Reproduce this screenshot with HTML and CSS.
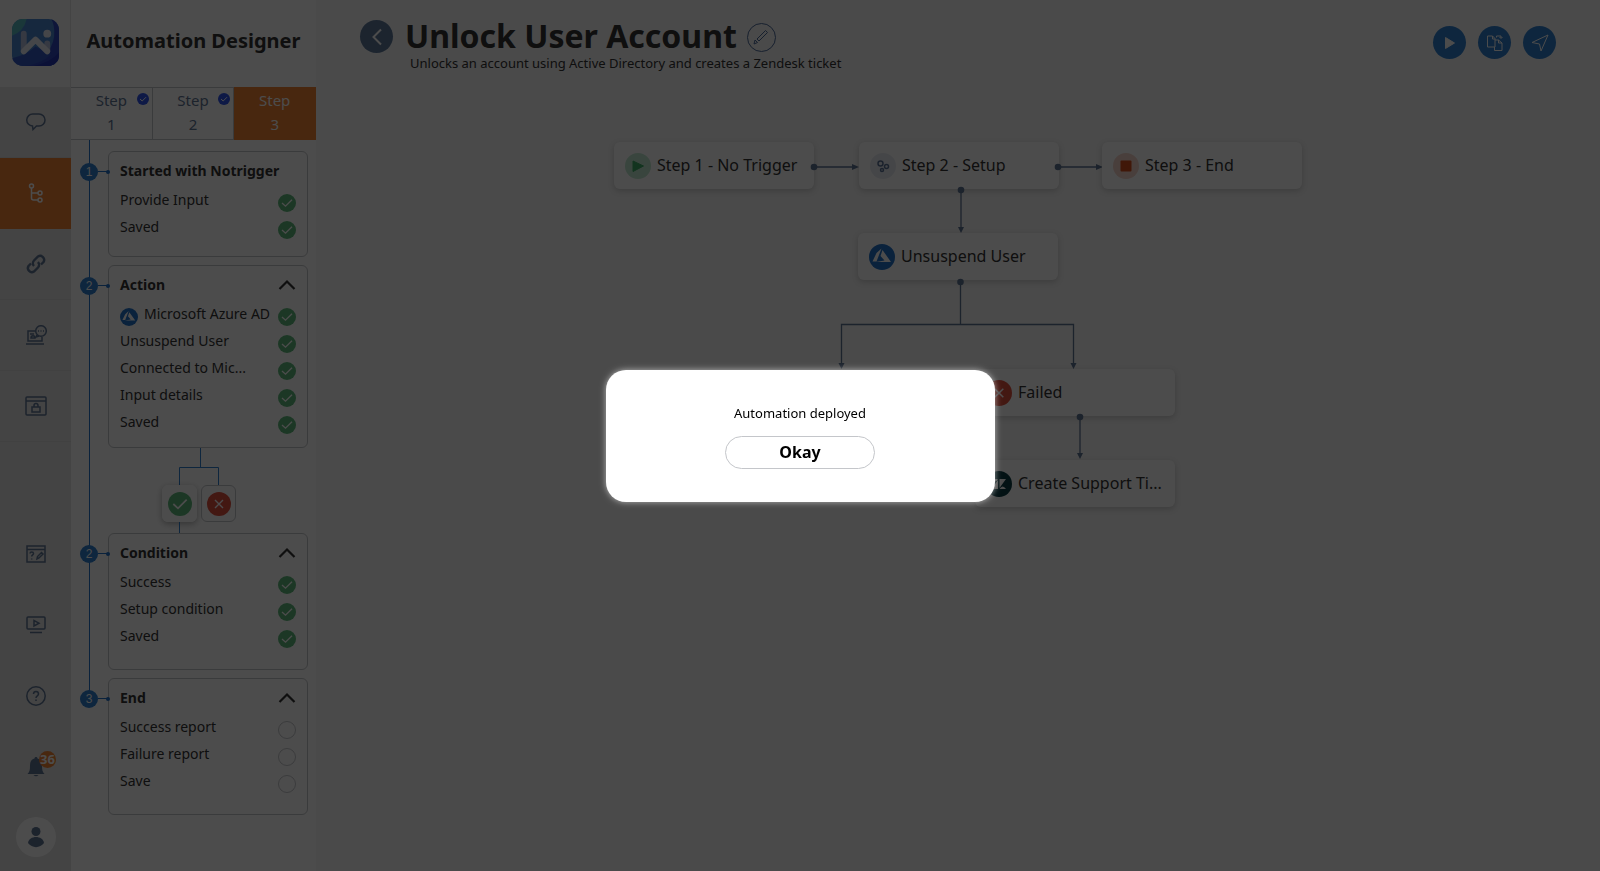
FILE: index.html
```html
<!DOCTYPE html>
<html lang="en">
<head>
  <meta charset="UTF-8" />
  <title>Automation Designer</title>
  <link rel="stylesheet" href="styles.css">
</head>
<body>

  <!-- shared icons -->
  <svg class="sprite" aria-hidden="true">
    <symbol id="check" viewBox="0 0 18 18"><circle cx="9" cy="9" r="9" fill="#5fba7d"/><path d="M4 9l3.5 3.2 6.5-6.4" fill="none" stroke="#fff" stroke-width="1.3"/></symbol>
    <symbol id="check-blue" viewBox="0 0 12 12"><circle cx="6" cy="6" r="6" fill="#2f54eb"/><path d="M3 6l2.2 2 3.8-3.8" fill="none" stroke="#fff"/></symbol>
    <symbol id="circle" viewBox="0 0 18 18"><circle cx="9" cy="9" r="8.5" fill="none" stroke="#c4c6ca"/></symbol>
    <symbol id="cross" viewBox="0 0 24 24"><circle cx="12" cy="12" r="12" fill="#e2503f"/><path d="M8 8l8 8M16 8l-8 8" fill="none" stroke="#fff" stroke-width="1.4"/></symbol>
    <symbol id="chevron" viewBox="0 0 18 12"><path d="M1.500 10L9 2.500l7.500 7.500" fill="none" stroke="#333" stroke-width="2.2"/></symbol>
    <symbol id="azure" viewBox="0 0 26 26"><circle cx="13" cy="13" r="13" fill="#2472c8"/><path d="M12.500 4.500L7.500 9 3.500 17.500h4zM13.500 6l-2 6 4 4.500-8.500 1.500h15z" fill="#fff"/></symbol>
  </svg>

  <div class="app">
    <nav class="rail">
      <a class="logo" href="#" aria-label="Home">
        <svg width="47" height="47" viewBox="0 0 48 48">
          <defs>
            <clipPath id="logoClip"><rect width="48" height="48" rx="11"/></clipPath>
          </defs>
          <g clip-path="url(#logoClip)">
            <rect width="48" height="48" fill="#4a86d0"/>
            <path d="M0 0h15Q12 13 0 17z" fill="#58b8c0"/>
            <path d="M40 0h8v48H10Q40 40 43 18 44 6 40 0z" fill="#2f49c0"/>
            <path d="M0 48V40Q14 37 24 28L40 36Q30 46 12 48z" fill="#3558c4"/>
            <path d="M22 48Q40 44 48 34v14z" fill="#2636b4"/>
          </g>
          <g fill="none" stroke-linecap="round" stroke-linejoin="round" stroke-width="6">
            <path d="M12 15v17M36 25v7" stroke="#b4c0dc"/>
            <path d="M12 33l12-12 12 12" stroke="#e8ecf4"/>
          </g>
          <circle cx="36" cy="15" r="4" fill="#e8ecf4"/>
        </svg>
      </a>
      <a class="rail-item" href="#" aria-label="Chat">
        <svg width="20" height="18" viewBox="0 0 20 18"><path d="M7 1h6a6 6 0 0 1 0 12h-2.500L7 16.500 6.500 13A6 6 0 0 1 7 1z"/></svg>
      </a>
      <a class="rail-item active" href="#" aria-label="Automations">
        <svg width="16" height="20" viewBox="0 0 16 20"><circle cx="3.500" cy="3" r="2"/><circle cx="12" cy="10" r="2"/><circle cx="12" cy="17" r="2"/><path d="M3.500 5v10q0 2 2 2H10M3.500 10H10"/></svg>
      </a>
      <a class="rail-item" href="#" aria-label="Connections">
        <svg width="22" height="22" viewBox="0 0 22 22"><g stroke-width="2.4"><path d="M9 13a4 4 0 0 1 0-5.500l4-4a4 4 0 0 1 5.500 5.500l-2.500 2.500"/><path d="M13 9a4 4 0 0 1 0 5.500l-4 4A4 4 0 0 1 3.500 13L6 10.500"/></g></svg>
      </a>
      <a class="rail-item" href="#" aria-label="Service desk">
        <svg width="22" height="20" viewBox="0 0 22 20"><path d="M10 6H3v10h14v-4M1 19h18M5 9h4M6 13c0-3 4-3 4 0z"/><circle cx="16" cy="6" r="5.300"/><path d="M13 6h1M15.500 6h1M18 6h1M12 10l-1 2 3-1"/></svg>
      </a>
      <a class="rail-item" href="#" aria-label="Vault">
        <svg width="22" height="20" viewBox="0 0 22 20"><rect x="1" y="1" width="20" height="18" rx="1"/><path d="M1 5h20M9 11V9.500a2 2 0 0 1 4 0V11"/><rect x="7" y="11" width="8" height="5"/></svg>
      </a>

      <a class="rail-item rail-bottom" href="#" aria-label="Forms">
        <svg width="20" height="18" viewBox="0 0 20 18"><rect x="1" y="1" width="18" height="16"/><path d="M1 4.500h18M4 8.500c0-2 3.500-2 3.500 0 0 1.500-1.800 1.300-1.800 3M5.700 13.500v1M11 14l.5-2.500 4-4 1.500 1.500-4 4z"/></svg>
      </a>
      <a class="rail-item" href="#" aria-label="Tutorials">
        <svg width="20" height="18" viewBox="0 0 20 18"><rect x="1" y="1" width="18" height="12" rx="1"/><path d="M8 4.500v5.500l5-2.800zM4 16.500h12"/></svg>
      </a>
      <a class="rail-item" href="#" aria-label="Help">
        <svg width="20" height="20" viewBox="0 0 20 20"><circle cx="10" cy="10" r="9.200"/><path d="M7.500 8c0-3.500 5-3.500 5 0 0 2-2.500 1.800-2.500 4M10 13.500V15"/></svg>
      </a>
      <a class="rail-item" href="#" aria-label="Notifications">
        <svg width="18" height="20" viewBox="0 0 18 20"><path class="solid" d="M9 0c1 0 1.500.7 1.500 1.500C14 2.500 15 5 15 9c0 4 .5 6 2.500 8H.500C2.500 15 3 13 3 9c0-4 1-6.500 4.500-7.500C7.500.700 8 0 9 0zM6.500 18h5q-2.500 2.500-5 0z"/></svg>
        <span class="count">36</span>
      </a>
      <a class="rail-item avatar" href="#" aria-label="Profile">
        <svg width="40" height="40" viewBox="0 0 40 40"><circle cx="20" cy="20" r="20" fill="#fff" stroke="none"/><circle class="solid" cx="20" cy="14.500" r="4.500"/><path class="solid" d="M12 26c1-8 15-8 16 0-4 5.500-12 5.500-16 0z"/></svg>
      </a>
    </nav>

    <aside class="panel">
      <h2 class="panel-title">Automation Designer</h2>
      <div class="steps">
        <button class="step">Step<br>1<svg class="step-check"><use href="#check-blue"/></svg></button>
        <button class="step">Step<br>2<svg class="step-check"><use href="#check-blue"/></svg></button>
        <button class="step current">Step<br>3</button>
      </div>

      <div class="timeline">
        <section class="stage">
          <div class="marker"><span>1</span></div>
          <div class="card card-short">
            <h3>Started with Notrigger</h3>
            <ul>
              <li><span>Provide Input</span><svg><use href="#check"/></svg></li>
              <li><span>Saved</span><svg><use href="#check"/></svg></li>
            </ul>
          </div>
        </section>

        <section class="stage has-branch">
          <div class="marker"><span>2</span></div>
          <div class="stage-body">
            <div class="card">
              <h3>Action<button class="toggle" aria-label="Collapse"><svg><use href="#chevron"/></svg></button></h3>
              <ul>
                <li><svg><use href="#azure"/></svg><span class="with-logo">Microsoft Azure AD</span><svg><use href="#check"/></svg></li>
                <li><span>Unsuspend User</span><svg><use href="#check"/></svg></li>
                <li><span>Connected to Mic...</span><svg><use href="#check"/></svg></li>
                <li><span>Input details</span><svg><use href="#check"/></svg></li>
                <li><span>Saved</span><svg><use href="#check"/></svg></li>
              </ul>
            </div>
            <div class="branch">
              <svg class="branch-lines" width="78" height="37"><path d="M41.500 0v19M20.500 37V19.500h39V37"/></svg>
              <div class="branch-buttons">
                <button class="outcome selected" aria-label="Success"><svg viewBox="0 0 18 18"><use href="#check"/></svg></button>
                <button class="outcome" aria-label="Failed"><svg><use href="#cross"/></svg></button>
              </div>
              <svg class="branch-lines" width="78" height="11"><path d="M20.500 0v11"/></svg>
            </div>
          </div>
        </section>

        <section class="stage">
          <div class="marker"><span>2</span></div>
          <div class="card">
            <h3>Condition<button class="toggle" aria-label="Collapse"><svg><use href="#chevron"/></svg></button></h3>
            <ul>
              <li><span>Success</span><svg><use href="#check"/></svg></li>
              <li><span>Setup condition</span><svg><use href="#check"/></svg></li>
              <li><span>Saved</span><svg><use href="#check"/></svg></li>
            </ul>
          </div>
        </section>

        <section class="stage">
          <div class="marker"><span>3</span></div>
          <div class="card">
            <h3>End<button class="toggle" aria-label="Collapse"><svg><use href="#chevron"/></svg></button></h3>
            <ul>
              <li><span>Success report</span><svg><use href="#circle"/></svg></li>
              <li><span>Failure report</span><svg><use href="#circle"/></svg></li>
              <li><span>Save</span><svg><use href="#circle"/></svg></li>
            </ul>
          </div>
        </section>
      </div>
    </aside>

    <main class="main">
      <header class="header">
        <button class="back" aria-label="Back"><svg width="12" height="18" viewBox="0 0 12 18"><path d="M10 1.500L2.500 9l7.500 7.500" fill="none" stroke="#fff" stroke-width="2"/></svg></button>
        <div class="heading">
          <div class="title-row">
            <h1>Unlock User Account</h1>
            <button class="edit" aria-label="Edit name"><svg width="16" height="16" viewBox="0 0 16 16"><path d="M1 15l1-4 2.500 2.500zM4 10l8.500-8.500 2 2L6 12z" fill="none" stroke="#4e6b9b"/></svg></button>
          </div>
          <p>Unlocks an account using Active Directory and creates a Zendesk ticket</p>
        </div>
        <div class="actions">
          <button aria-label="Run"><svg width="12" height="14" viewBox="0 0 12 14"><path d="M1.500 1.500v11l9-5.500z" fill="#fff" stroke="#fff" stroke-linejoin="round"/></svg></button>
          <button aria-label="Duplicate"><svg width="18" height="18" viewBox="0 0 18 18"><path d="M1.500 2h5L9 4.500V13H1.500zM9 6h3.500L16 9v7.500H8.500V13M6.500 2v3H9M12.500 6v3H16M10.500 3.500V2H15v2M13.500 3L15 4.500 16.500 3" fill="none" stroke="#fff"/></svg></button>
          <button aria-label="Deploy"><svg width="18" height="18" viewBox="0 0 18 18"><path d="M17 1L1 8.500l7.500 1.500 1.500 7z" fill="none" stroke="#fff"/></svg></button>
        </div>
      </header>

      <div class="canvas">
        <svg class="wires" width="1284" height="450">
          <g class="lines"><path d="M498 77h40M742 77h40M645 100v38M644.500 192v42M525.500 274v-39.500H757.500V274M764 328v38"/></g>
          <g class="ends">
            <path d="M536 74v6l7-3zM780 74v6l7-3zM642 137h6l-3 6zM522.500 273h6l-3 6zM754.500 273h6l-3 6zM761 363h6l-3 6z"/>
          </g>
        </svg>
        <div class="node n-trigger"><svg viewBox="0 0 26 26"><circle cx="13" cy="13" r="13" fill="#bfe8cf"/><path d="M8 8v10.500L18.500 13z" fill="#3fae68" stroke="#3fae68" stroke-linejoin="round"/></svg><span>Step 1 - No Trigger</span></div>
        <div class="node n-setup"><svg viewBox="0 0 26 26"><circle cx="13" cy="13" r="13" fill="#e8ebf1"/><g fill="none" stroke="#5d7396" stroke-width="1.500"><circle cx="10.500" cy="10.500" r="2.500"/><circle cx="16.500" cy="13.500" r="2"/><circle cx="12" cy="17" r="1.500"/></g></svg><span>Step 2 - Setup</span></div>
        <div class="node n-end"><svg viewBox="0 0 26 26"><circle cx="13" cy="13" r="13" fill="#f5d3c8"/><rect x="7.500" y="7.500" width="11" height="11" rx="1" fill="#d84e1c"/></svg><span>Step 3 - End</span></div>
        <div class="node n-action"><svg><use href="#azure"/></svg><span>Unsuspend User</span></div>
        <div class="node n-failed"><svg><use href="#cross"/></svg><span>Failed</span></div>
        <div class="node n-ticket"><svg viewBox="0 0 26 26"><circle cx="13" cy="13" r="13" fill="#0b3c44"/><path d="M12 9v9H5.500zM5.500 8H12q-3.200 5-6.500 0zM13.500 17V8H20zM13.500 18q3.200-5 6.500 0z" fill="#fff"/></svg><span>Create Support Ti...</span></div>
        <svg class="wires dots" width="1284" height="450">
          <circle cx="498" cy="77" r="3.300"/><circle cx="742" cy="77" r="3.300"/><circle cx="645" cy="100" r="3.300"/><circle cx="644.500" cy="192" r="3.300"/><circle cx="764" cy="327" r="3.300"/>
        </svg>
      </div>
    </main>
  </div>

  <div class="overlay">
    <div class="modal" role="dialog" aria-modal="true" aria-labelledby="modalText">
      <p id="modalText">Automation deployed</p>
      <button class="okay">Okay</button>
    </div>
  </div>

</body>
</html>
```

FILE: styles.css
```css
* {
  box-sizing: border-box;
}
body {
  margin: 0;
  font-family: "Noto Sans", "Open Sans", sans-serif;
  font-size: 14px;
  color: #333;
  background-color: #f7f7f7;
}
h1, h2, h3, p, ul {
  margin: 0;
  padding: 0;
}
ul {
  list-style: none;
}
button {
  font-family: inherit;
  padding: 0;
  border: none;
  background: none;
  cursor: pointer;
}
.sprite {
  position: absolute;
  width: 0;
  height: 0;
}
.app {
  display: flex;
  min-height: 100vh;
}

/* left icon rail */
.rail {
  display: flex;
  flex-direction: column;
  flex: none;
  width: 71px;
  background-color: #e3e3e3;
}
.logo {
  display: flex;
  align-items: center;
  justify-content: center;
  height: 87px;
  padding-bottom: 3px;
  background-color: #f7f7f7;
  border-right: 1px solid #e3e3e3;
}
.rail-item {
  display: flex;
  position: relative;
  align-items: center;
  justify-content: center;
  height: 71px;
  border-bottom: 1px solid #dadada;
}
.rail-item svg {
  fill: none;
  stroke: #5f7595;
  stroke-width: 1.5;
}
.rail-item .solid {
  fill: #5f7595;
  stroke: none;
}
.rail-item.active {
  background-color: #f08235;
  border-color: #f08235;
}
.rail-item.active svg {
  stroke: #fff;
}
.rail-bottom {
  margin-top: auto;
}
.rail-bottom, .rail-bottom ~ .rail-item {
  border-bottom: none;
}
.rail-item.avatar {
  height: 69px;
}
.count {
  position: absolute;
  top: 20px;
  left: 39px;
  width: 17px;
  height: 17px;
  border-radius: 50%;
  background-color: #f08235;
  color: #fff;
  font-size: 13px;
  font-weight: bold;
  line-height: 17px;
  text-align: center;
}

/* designer panel */
.panel {
  flex: none;
  width: 245px;
  background-color: #fff;
}
.panel-title {
  height: 87px;
  font-size: 20px;
  line-height: 82px;
  text-align: center;
}
.steps {
  display: flex;
  height: 53px;
}
.step {
  position: relative;
  flex: 1;
  padding-bottom: 4px;
  border: 1px solid #c4c6ca;
  border-left: none;
  color: #5f7595;
  font-size: 15px;
  line-height: 24px;
}
.step.current {
  background-color: #f08235;
  border-color: #f08235;
  color: #fff;
}
.step-check {
  position: absolute;
  top: 5px;
  right: 3px;
  width: 12px;
  height: 12px;
}
.stage {
  display: flex;
  position: relative;
  padding: 0 8px 8px 0;
}
.stage:first-child {
  padding-top: 11px;
}
.stage.has-branch {
  padding-bottom: 0;
}
.stage::before {
  content: "";
  position: absolute;
  top: 0;
  left: 18px;
  width: 1px;
  height: 100%;
  background-color: #2472c8;
}
.stage:last-child::before {
  height: 20px;
}
.marker {
  display: flex;
  position: relative;
  align-items: center;
  flex: none;
  width: 37px;
  height: 41px;
  padding-left: 9px;
}
.marker span {
  width: 18px;
  height: 18px;
  border-radius: 50%;
  background-color: #2f80d0;
  color: #fff;
  font-family: "Liberation Sans", sans-serif;
  font-size: 12px;
  line-height: 18px;
  text-align: center;
}
.marker::before {
  content: "";
  order: 1;
  width: 10px;
  height: 1px;
  background-color: #2472c8;
}
.marker::after {
  content: "";
  position: absolute;
  right: -2px;
  width: 4px;
  height: 4px;
  border-radius: 50%;
  background-color: #2472c8;
}
.stage-body {
  flex: 1;
}
.card {
  flex: 1;
  min-height: 137px;
  padding: 0 11px 9px;
  border: 1px solid #c4c6ca;
  border-radius: 6px;
}
.card-short {
  min-height: 106px;
}
.card h3 {
  display: flex;
  align-items: center;
  justify-content: space-between;
  height: 37px;
  font-size: 14px;
}
.toggle svg {
  display: block;
  width: 18px;
  height: 12px;
}
.card li {
  display: flex;
  align-items: center;
  height: 27px;
}
.card li span {
  flex: 1;
  padding-bottom: 6px;
  white-space: nowrap;
}
.card li .with-logo {
  padding-left: 6px;
}
.card li svg {
  flex: none;
  width: 18px;
  height: 18px;
}
.branch {
  padding-left: 51px;
}
.branch svg {
  display: block;
}
.branch-lines {
  fill: none;
  stroke: #2f80d0;
}
.branch-buttons {
  display: flex;
  gap: 4px;
  padding-left: 3px;
}
.outcome {
  display: flex;
  align-items: center;
  justify-content: center;
  width: 35px;
  height: 37px;
  border: 1px solid #c4c6ca;
  border-radius: 6px;
}
.outcome.selected {
  border-color: #fff;
  box-shadow: 0 2px 6px rgba(0, 0, 0, 0.3);
}
.outcome svg {
  width: 24px;
  height: 24px;
}

/* main area */
.main {
  flex: 1;
  min-width: 0;
}
.header {
  display: flex;
  align-items: flex-start;
  height: 90px;
  padding: 20px 44px 0;
}
.back, .actions button {
  display: flex;
  align-items: center;
  justify-content: center;
  flex: none;
  width: 33px;
  height: 33px;
  border-radius: 50%;
  background-color: #5f7a9c;
}
.heading {
  flex: 1;
  padding-left: 12px;
}
.title-row {
  display: flex;
  align-items: center;
  gap: 10px;
  height: 34px;
}
h1 {
  font-size: 32px;
  line-height: 34px;
  padding-bottom: 2px;
}
.edit {
  display: flex;
  align-items: center;
  justify-content: center;
  width: 29px;
  height: 29px;
  border: 1px solid #4e6b9b;
  border-radius: 50%;
}
.heading p {
  padding-left: 5px;
  font-size: 13px;
  line-height: 18px;
}
.actions {
  display: flex;
  gap: 12px;
  padding-top: 6px;
}
.actions button {
  background-color: #2f80d0;
}

/* flow diagram, nodes are placed on a free canvas */
.canvas {
  position: relative;
  height: 450px;
}
.wires {
  position: absolute;
  top: 0;
  left: 0;
}
.lines {
  fill: none;
  stroke: #5f7595;
  stroke-width: 1.3;
}
.ends, .dots {
  fill: #5f7595;
}
.node {
  display: flex;
  position: absolute;
  align-items: center;
  gap: 6px;
  width: 200px;
  height: 47px;
  padding: 0 11px;
  border-radius: 6px;
  background-color: #fff;
  box-shadow: 0 2px 6px rgba(0, 0, 0, 0.18);
  font-size: 16px;
}
.node svg {
  flex: none;
  width: 26px;
  height: 26px;
}
.node span {
  padding-bottom: 2px;
  white-space: nowrap;
}
.n-trigger { left: 298px; top: 52px; }
.n-setup { left: 543px; top: 52px; }
.n-end { left: 786px; top: 52px; }
.n-action { left: 542px; top: 143px; }
.n-failed { left: 659px; top: 279px; }
.n-ticket { left: 659px; top: 370px; }

/* deployed message */
.overlay {
  display: flex;
  position: fixed;
  inset: 0;
  align-items: center;
  justify-content: center;
  background-color: rgba(0, 0, 0, 0.7);
}
.modal {
  display: flex;
  flex-direction: column;
  align-items: center;
  width: 389px;
  padding: 33px 20px;
  border-radius: 20px;
  background-color: #fff;
  box-shadow: 0 0 6px rgba(255, 255, 255, 0.6);
  color: #000;
}
.modal p {
  font-size: 13px;
  line-height: 20px;
}
.okay {
  width: 150px;
  height: 33px;
  margin-top: 13px;
  border: 1px solid #c4c6ca;
  border-radius: 17px;
  font-size: 16px;
  font-weight: bold;
}
```
